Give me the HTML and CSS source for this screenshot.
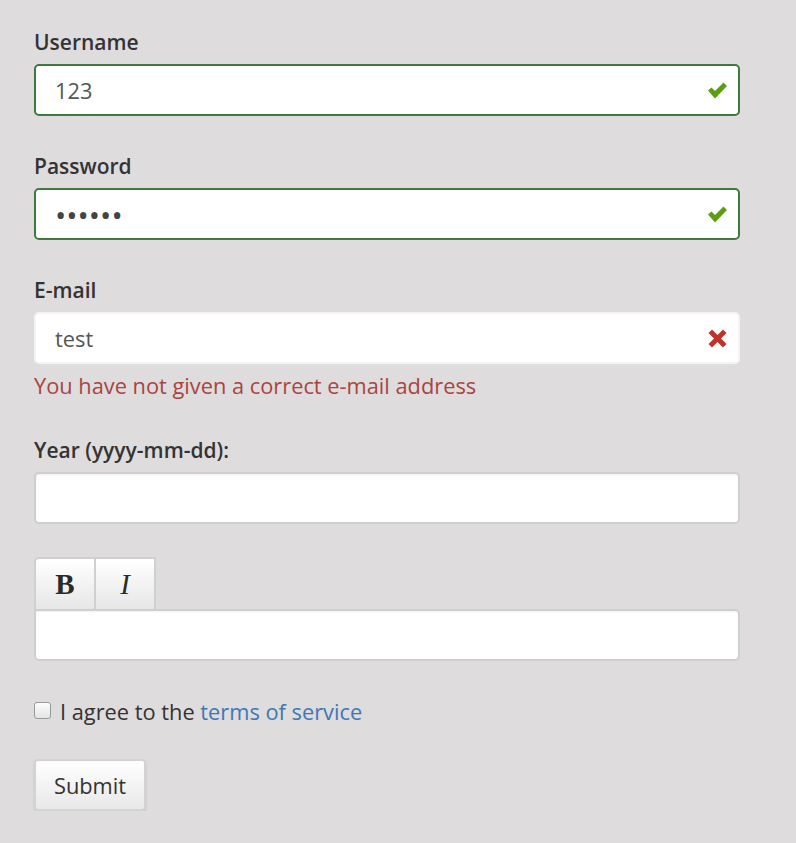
FILE: index.html
```html
<!DOCTYPE html>
<html>
<head>
<meta charset="utf-8">
<link rel="stylesheet" href="styles.css">
</head>
<body>
<form class="form">
  <div class="group">
    <label class="label">Username</label>
    <div class="field valid">
      <span class="value">123</span>
      <svg class="icon" width="19" height="19" viewBox="0 0 19 19"><path d="M0 9.5 L3.5 6.5 L7 10 L15.5 1.5 L19 5 L7 17.5 Z" fill="#5b9e12"/></svg>
    </div>
  </div>
  <div class="group">
    <label class="label">Password</label>
    <div class="field valid">
      <span class="value dots">••••••</span>
      <svg class="icon" width="19" height="19" viewBox="0 0 19 19"><path d="M0 9.5 L3.5 6.5 L7 10 L15.5 1.5 L19 5 L7 17.5 Z" fill="#5b9e12"/></svg>
    </div>
  </div>
  <div class="group">
    <label class="label">E-mail</label>
    <div class="field invalid">
      <span class="value">test</span>
      <svg class="icon" width="19" height="19" viewBox="0 0 19 19"><path d="M0.5 4 L4 0.5 L9.5 6 L15 0.5 L18.5 4 L13 9.5 L18.5 15 L15 18.5 L9.5 13 L4 18.5 L0.5 15 L6 9.5 Z" fill="#c0332b"/></svg>
    </div>
    <div class="error">You have not given a correct e-mail address</div>
  </div>
  <div class="group">
    <label class="label">Year (yyyy-mm-dd):</label>
    <div class="field plain"></div>
  </div>
  <div class="editor">
    <div class="toolbar">
      <button type="button" class="tool bold">B</button>
      <button type="button" class="tool italic">I</button>
    </div>
    <div class="field plain"></div>
  </div>
  <div class="check-row">
    <span class="checkbox"></span>
    <span class="agree">I agree to the <a class="link">terms of service</a></span>
  </div>
  <button type="button" class="submit">Submit</button>
</form>
</body>
</html>
```

FILE: styles.css
```css
html, body {
  margin: 0;
  padding: 0;
  background: #dedcdd;
}
body {
  font-family: "Open Sans", "Lato", sans-serif;
  color: #333;
}
.form {
  width: 706px;
  padding: 28px 0 0 34px;
  display: flex;
  flex-direction: column;
}
.group {
  display: flex;
  flex-direction: column;
  margin-bottom: 36px;
}
.label {
  font-size: 21px;
  font-weight: 600;
  line-height: 28px;
  margin-bottom: 8px;
  color: #333;
}
.field {
  box-sizing: border-box;
  height: 52px;
  background: #fff;
  border-radius: 5px;
  display: flex;
  align-items: center;
  justify-content: space-between;
  padding: 0 11px 0 19px;
  font-size: 21.8px;
  color: #555;
}
.field.valid {
  border: 2px solid #3e7a3e;
}
.field.invalid {
  border: 2px solid #f4f4f4;
}
.field.plain {
  border: 2px solid #cfcfcf;
  box-shadow: inset 0 1px 2px rgba(0,0,0,0.06);
}
.dots {
  font-size: 30px;
  letter-spacing: 0;
  color: #444;
}
.icon {
  display: block;
}
.error {
  font-size: 21.8px;
  line-height: 28px;
  margin-top: 8px;
  color: #a94442;
}
.editor {
  display: flex;
  flex-direction: column;
  margin-top: -3px;
  margin-bottom: 37px;
}
.toolbar {
  display: flex;
}
.tool {
  box-sizing: border-box;
  width: 61px;
  height: 52px;
  border: 2px solid #d0d0d0;
  border-bottom: none;
  background: linear-gradient(#ffffff, #e6e6e6);
  font-family: "Liberation Serif", "DejaVu Serif", serif;
  font-size: 29px;
  color: #2a2a2a;
  padding: 0;
  margin: 0;
}
.tool + .tool {
  border-left-width: 1px;
}
.tool.bold {
  border-radius: 5px 0 0 0;
  border-right-width: 1px;
  font-weight: 700;
}
.tool.italic {
  font-style: italic;
  font-weight: 400;
}
.editor .field {
  border-top-left-radius: 0;
}
.check-row {
  display: flex;
  align-items: center;
  font-size: 21.8px;
  line-height: 28px;
  height: 28px;
}
.checkbox {
  box-sizing: border-box;
  width: 17px;
  height: 17px;
  margin: 0 9px 4px 0;
  border: 1px solid #9a9a9a;
  border-radius: 3px;
  background: linear-gradient(#fdfdfd, #e4e4e4);
}
.agree {
  color: #333;
}
.link {
  color: #3d78b5;
}
.submit {
  align-self: flex-start;
  margin-top: 33px;
  box-sizing: border-box;
  width: 112px;
  height: 52px;
  border: 2px solid #d3d3d3;
  border-radius: 4px;
  background: linear-gradient(#ffffff, #e8e8e8);
  box-shadow: 0 1px 2px rgba(0,0,0,0.15);
  font-family: "Open Sans", "Lato", sans-serif;
  font-size: 21.8px;
  color: #333;
  padding: 0;
}
```
